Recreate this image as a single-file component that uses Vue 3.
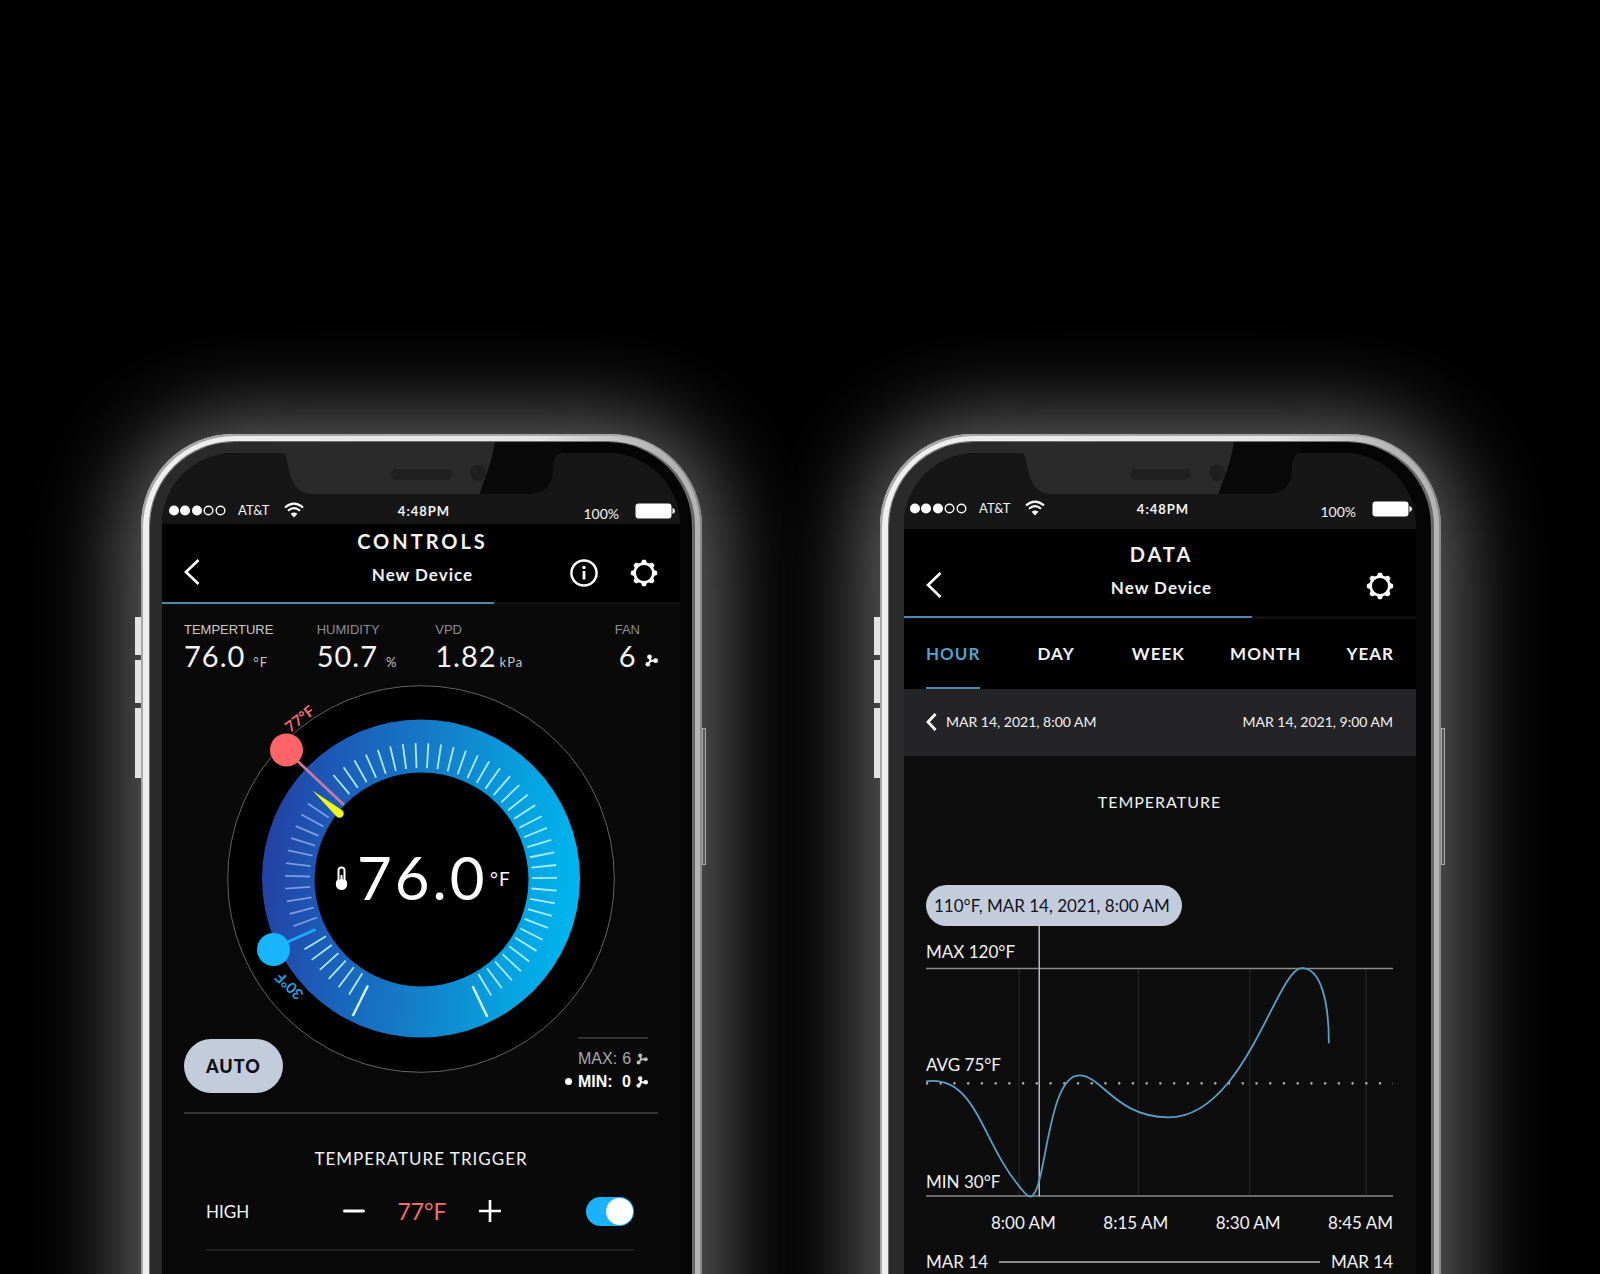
<script setup>
import { ref } from 'vue'

const phones = [
  { id: 'controls', title: 'CONTROLS', progress: 64 },
  { id: 'data', title: 'DATA', progress: 68 },
]

const stats = [
  { label: 'TEMPERTURE', value: '76.0', unit: '°F', bright: true },
  { label: 'HUMIDITY', value: '50.7', unit: '%' },
  { label: 'VPD', value: '1.82', unit: 'kPa', tight: true },
]

const hidden = [7, 19, 20]
const ticks = Array.from({ length: 58 }, (_, i) => ({
  id: i,
  angle: -153.5 + i * 5.4,
  long: i === 0 || i === 57,
  dim: i > 7 && i < 19,
})).filter((t) => !hidden.includes(t.id))

const tabs = ['HOUR', 'DAY', 'WEEK', 'MONTH', 'YEAR']
const activeTab = ref('HOUR')
const gridLines = [93, 212, 323, 439]
const times = ['8:00 AM', '8:15 AM', '8:30 AM', '8:45 AM']

const high = ref(77)
const highOn = ref(true)
</script>

<template>
  <main class="stage">
    <section v-for="p in phones" :key="p.id" class="phone" :class="p.id">
      <span class="side left one"></span>
      <span class="side left two"></span>
      <span class="side left three"></span>
      <span class="side right"></span>

      <div class="bezel">
        <svg class="notch" viewBox="0 0 542 52" aria-hidden="true">
          <path fill="#2a2a2a" d="M120 0V11H131Q136 11 137 18C140 38 146 52 162 52H330C332 42 341 26 345 0Z" />
          <path fill="#090909" d="M345 0C341 26 332 42 330 52H380C396 51 403 42 403 26Q403 11 412 11V0Z" />
          <rect x="241" y="26" width="61" height="12" rx="6" fill="#202020" />
          <path d="M246 26H298" stroke="#343434" fill="none" />
          <circle cx="328" cy="31" r="8" fill="#1f1f1f" />
        </svg>

        <div class="screen">
          <div class="status">
            <div class="status-left">
              <svg width="57" height="11" viewBox="0 0 57 11" aria-hidden="true">
                <g fill="#fff">
                  <circle cx="5" cy="5.5" r="5" /><circle cx="16" cy="5.5" r="5" /><circle cx="28" cy="5.5" r="5" />
                </g>
                <g fill="none" stroke="#fff" stroke-width="1.4">
                  <circle cx="39.500" cy="5.5" r="4.300" /><circle cx="51.500" cy="5.5" r="4.300" />
                </g>
              </svg>
              <span class="carrier">AT&amp;T</span>
              <svg class="wifi" width="20" height="16" viewBox="0 0 20 16" fill="none" stroke="#fff" aria-hidden="true">
                <path d="M1 5.500Q10-2.200 19 5.500" stroke-width="2.100" />
                <path d="M4 8.800Q10 3.400 16 8.800" stroke-width="2" />
                <path d="M10 15.500L6.600 11.800Q10 9 13.400 11.800Z" fill="#fff" stroke="none" />
              </svg>
            </div>
            <span class="clock">4:48PM</span>
            <div class="status-right">
              <span class="percent">100%</span>
              <svg class="battery" width="40" height="16" viewBox="0 0 40 16" aria-hidden="true">
                <rect x="0.500" y="0.500" width="36" height="15" rx="3" fill="#fff" />
                <path d="M37.500 5Q40 6 40 8T37.500 11Z" fill="#fff" />
              </svg>
            </div>
          </div>

          <header class="header">
            <button class="icon-btn back" aria-label="Back">
              <svg width="16" height="26" viewBox="0 0 16 26" fill="none" stroke="#fff" stroke-width="2.600">
                <path d="M14.500 1L2 13L14.500 25" />
              </svg>
            </button>
            <div class="titles">
              <h1>{{ p.title }}</h1>
              <p>New Device</p>
            </div>
            <div class="actions">
              <button v-if="p.id === 'controls'" class="icon-btn" aria-label="Information">
                <svg width="28" height="28" viewBox="0 0 28 28" fill="none" stroke="#fff">
                  <circle cx="14" cy="14" r="12.600" stroke-width="2.500" />
                  <path d="M14 12V20.500" stroke-width="2.800" />
                  <circle cx="14" cy="8.500" r="1.700" fill="#fff" stroke="none" />
                </svg>
              </button>
              <button class="icon-btn" aria-label="Settings">
                <svg width="28" height="28" viewBox="0 0 28 28" fill="#fff">
                  <circle cx="14" cy="14" r="9.400" fill="none" stroke="#fff" stroke-width="2.700" />
                  <path
                    v-for="n in 8" :key="n" :transform="`rotate(${n * 45} 14 14)`"
                    d="M10.800 5L11.800 1.800Q12.200 0.800 13 0.800H15Q15.800 0.800 16.200 1.800L17.200 5Z"
                  />
                </svg>
              </button>
            </div>
          </header>
          <div class="progress"><div class="bar" :style="{ width: p.progress + '%' }"></div></div>

          <div v-if="p.id === 'controls'" class="controls-body">
            <dl class="stats">
              <div v-for="s in stats" :key="s.label">
                <dt :class="{ bright: s.bright }">{{ s.label }}</dt>
                <dd :class="{ tight: s.tight }">{{ s.value }}<small>{{ s.unit }}</small></dd>
              </div>
              <div class="fan-stat">
                <dt>FAN</dt>
                <dd>6
                  <svg class="fan" width="13" height="13" viewBox="0 0 13 13" aria-hidden="true">
                    <path d="M4.500 3L5.500 7L3 10M5.500 7L10.500 6.500" stroke="#fff" stroke-width="2.200" fill="none" />
                    <circle cx="4.500" cy="2.800" r="2.400" fill="#fff" /><circle cx="2.800" cy="10.300" r="2.300" fill="#fff" /><circle cx="10.600" cy="6.700" r="2.400" fill="#fff" />
                  </svg>
                </dd>
              </div>
            </dl>

            <div class="dial-area">
              <svg class="dial" viewBox="0 0 388 388" role="img" aria-label="Temperature dial">
                <defs>
                  <linearGradient id="ring" x1="0" y1="0.450" x2="1" y2="0.550">
                    <stop offset="0" stop-color="#2440a4" />
                    <stop offset="0.200" stop-color="#1c5bb8" />
                    <stop offset="0.500" stop-color="#157cc8" />
                    <stop offset="0.800" stop-color="#06a2e0" />
                    <stop offset="1" stop-color="#00b6ee" />
                  </linearGradient>
                </defs>
                <circle cx="194" cy="194" r="193.300" fill="#000" stroke="#636363" />
                <circle cx="194" cy="193.500" r="159" fill="url(#ring)" />
                <circle cx="194.500" cy="194.500" r="107" fill="#000" />
                <line
                  v-for="t in ticks" :key="t.id" class="tick" :class="{ dim: t.dim, long: t.long }"
                  x1="194" x2="194" :y1="t.long ? 41 : 58" :y2="t.long ? 75 : 83"
                  :transform="`rotate(${t.angle} 194 194)`"
                />
                <line x1="62" y1="68" x2="117" y2="120" stroke="#c97a9d" stroke-width="2.800" />
                <circle cx="59.500" cy="65" r="16.500" fill="#ff6469" />
                <line x1="56" y1="259" x2="88.500" y2="244.500" stroke="#17aef8" stroke-width="3" />
                <circle cx="46.500" cy="264.500" r="16.500" fill="#18b4fc" />
                <path d="M85.500 105.500L115.500 125.500A4 4 0 0 1 109.500 131.500Z" fill="#f4f514" />
                <text class="mark" fill="#f06e70" text-anchor="middle" transform="translate(76 38) rotate(-38)">77°F</text>
                <text class="mark" fill="#2a9bd8" text-anchor="middle" transform="translate(66 297) rotate(224)">30°F</text>
                <path d="M111.500 185.500A3 3 0 0 1 117.500 185.500V195A4.700 4.700 0 1 1 111.500 195Z" fill="#000" stroke="#fff" stroke-width="2" />
                <circle cx="114.500" cy="199.500" r="5.600" fill="#fff" />
                <rect x="113.500" y="190" width="2" height="8" fill="#fff" />
                <text class="reading" x="130" y="215">76.0</text>
                <text class="reading-unit" x="263" y="201">°F</text>
              </svg>

              <div class="dial-foot">
                <button class="auto">AUTO</button>
                <ul class="limits">
                  <li>
                    <span>MAX:</span><span class="level">6</span>
                    <svg class="fan" width="12" height="12" viewBox="0 0 13 13" aria-hidden="true">
                      <path d="M4.500 3L5.500 7L3 10M5.500 7L10.500 6.500" stroke="#bbb" stroke-width="2" fill="none" />
                      <circle cx="4.500" cy="2.800" r="2.200" fill="#bbb" /><circle cx="2.800" cy="10.300" r="2.200" fill="#bbb" /><circle cx="10.600" cy="6.700" r="2.200" fill="#bbb" />
                    </svg>
                  </li>
                  <li class="current">
                    <i class="dot"></i><span>MIN:</span><span class="level">0</span>
                    <svg class="fan" width="12" height="12" viewBox="0 0 13 13" aria-hidden="true">
                      <path d="M4.500 3L5.500 7L3 10M5.500 7L10.500 6.500" stroke="#fff" stroke-width="2.200" fill="none" />
                      <circle cx="4.500" cy="2.800" r="2.400" fill="#fff" /><circle cx="2.800" cy="10.300" r="2.300" fill="#fff" /><circle cx="10.600" cy="6.700" r="2.400" fill="#fff" />
                    </svg>
                  </li>
                </ul>
              </div>
            </div>

            <hr />
            <h2>TEMPERATURE TRIGGER</h2>
            <div class="trigger">
              <label for="high-toggle">HIGH</label>
              <div class="stepper">
                <button class="icon-btn" aria-label="Lower" @click="high--">
                  <svg width="22" height="22" viewBox="0 0 22 22" stroke="#fff" stroke-width="3" stroke-linecap="round"><path d="M1.500 11H20.500" /></svg>
                </button>
                <output>{{ high }}°F</output>
                <button class="icon-btn" aria-label="Raise" @click="high++">
                  <svg width="22" height="22" viewBox="0 0 22 22" stroke="#fff" stroke-width="2.600"><path d="M0 11H22M11 0V22" /></svg>
                </button>
              </div>
              <input id="high-toggle" v-model="highOn" type="checkbox" class="toggle" />
            </div>
          </div>

          <div v-else class="data-body">
            <nav class="tabs">
              <button v-for="t in tabs" :key="t" :class="{ active: t === activeTab }" @click="activeTab = t">{{ t }}</button>
            </nav>
            <div class="range">
              <button class="icon-btn" aria-label="Previous hour">
                <svg width="11" height="18" viewBox="0 0 11 18" fill="none" stroke="#fff" stroke-width="2.800"><path d="M9.500 1L2 9L9.500 17" /></svg>
              </button>
              <span>MAR 14, 2021, 8:00 AM</span>
              <span class="to">MAR 14, 2021, 9:00 AM</span>
            </div>
            <div class="chart">
              <h2>TEMPERATURE</h2>
              <div class="pill">110°F, MAR 14, 2021, 8:00 AM</div>
              <svg class="plot" viewBox="0 0 466 272" role="img" aria-label="Temperature by hour">
                <line v-for="x in gridLines" :key="x" :x1="x" :x2="x" y1="43" y2="269" stroke="#292929" />
                <path d="M0 42.500H466M0 269.500H466" stroke="#8b8b8b" stroke-width="1.500" />
                <line x1="1" x2="467" y1="157" y2="157" stroke="#aaa" stroke-width="2.600" stroke-linecap="round" stroke-dasharray="0 13.700" />
                <line x1="113" x2="113" y1="0" y2="270" stroke="#b6bac8" stroke-width="1.500" />
                <path
                  d="M0 155C50 148 55 215 94 261C98 266 101 270 104 270C120 270 120 149 153 149C175 149 190 191 242 191C318 191 350 42 375 42C394 42 402 75 402 117"
                  fill="none" stroke="#5a9fc6" stroke-width="1.800"
                />
                <text x="0" y="32">MAX 120°F</text>
                <text x="0" y="145">AVG 75°F</text>
                <text x="0" y="261">MIN 30°F</text>
              </svg>
              <div class="times"><span v-for="t in times" :key="t">{{ t }}</span></div>
              <div class="days"><span>MAR 14</span><i></i><span>MAR 14</span></div>
            </div>
          </div>
        </div>
      </div>
    </section>
  </main>
</template>

<style>
body {
  margin: 0;
  background: #000;
}
</style>

<style scoped>
* {
  box-sizing: border-box;
}
.stage {
  display: flex;
  gap: 178px;
  min-height: 100vh;
  padding: 434px 159px 0 141px;
  overflow: hidden;
  background: #000;
  color: #f2f2f2;
  font-family: Lato, "Noto Sans", sans-serif;
}
.phone {
  position: relative;
  flex: 1;
  display: flex;
  min-width: 0;
  margin-bottom: -100px;
  padding: 8px 10px 0 9px;
  border-radius: 92px 92px 0 0;
  background: linear-gradient(to right, #efefef 0, #e6e6e6 70%, #b4b4b4 92%);
  box-shadow:
    inset 2px 2px 0 #a6a6a6,
    inset -2px 0 0 #8a8a8a,
    0 4px 90px 16px rgba(255, 255, 255, 0.42);
}
.side {
  position: absolute;
  background: #e4e4e4;
}
.left {
  left: -6px;
  width: 6px;
}
.one {
  top: 183px;
  height: 38px;
}
.two {
  top: 226px;
  height: 43px;
}
.three {
  top: 274px;
  height: 70px;
}
.side.right {
  right: -4px;
  top: 294px;
  width: 4px;
  height: 137px;
  border: 1px solid #a8a8a8;
  background: #555;
}
.bezel {
  position: relative;
  flex: 1;
  display: flex;
  min-width: 0;
  padding: 11px 12px 0;
  border-radius: 84px 84px 0 0;
  background: linear-gradient(to right, #2a2a2a 63%, #050505 64%);
  box-shadow: 0 0 0 1px #6f6f6f, 3px 0 0 #666;
}
.data .bezel {
  padding: 11px 15px 0;
}
.notch {
  position: absolute;
  top: 0;
  left: 0;
  width: 100%;
}
.screen {
  flex: 1;
  min-width: 0;
  overflow: hidden;
  border-radius: 72px 72px 0 0;
  background: #090909;
}
.data .screen {
  background: #0d0d0d;
}

.status {
  display: grid;
  grid-template-columns: 1fr auto 1fr;
  align-items: end;
  height: 71px;
  padding: 0 5px 5px 7px;
  background: #161616;
  font-size: 14px;
  line-height: 18px;
}
.data .status {
  height: 76px;
  padding: 0 4px 12px 6px;
}
.status-left,
.status-right {
  display: flex;
  align-items: center;
}
.status-right {
  justify-content: flex-end;
  align-items: flex-start;
  gap: 16px;
  height: 18px;
}
.percent {
  padding-top: 4px;
}
.battery {
  margin-top: 2px;
}
.carrier {
  margin: 0 14px 0 12px;
  font-size: 13px;
}
.clock {
  padding-left: 4px;
  font-size: 13px;
  font-weight: 700;
  line-height: 16px;
  letter-spacing: 1px;
}

.header {
  display: grid;
  grid-template-columns: 1fr auto 1fr;
  align-items: end;
  padding: 7px 22px 17px;
  background: #000;
}
.data .header {
  padding: 15px 22px 18px;
}
.icon-btn {
  display: flex;
  padding: 0;
  border: 0;
  background: none;
}
.titles {
  padding-left: 3px;
  text-align: center;
}
h1 {
  margin: 0 0 14px;
  font-size: 20px;
  font-weight: 700;
  line-height: 20px;
  letter-spacing: 3px;
}
.titles p {
  margin: 0;
  font-size: 17px;
  font-weight: 700;
  line-height: 20px;
  letter-spacing: 1px;
}
.actions {
  display: flex;
  justify-content: flex-end;
  gap: 32px;
  margin-bottom: -2px;
}
.progress {
  height: 3px;
  background: #101010;
}
.bar {
  height: 2px;
  background: #4c88b0;
}

.controls-body {
  padding: 17px 22px 0;
}
.stats {
  display: grid;
  grid-template-columns: 28% 25% 1fr auto;
  margin: 0 0 13px;
}
dt {
  color: #8e8e8e;
  font: 13px/16px "Liberation Sans", Arial, sans-serif;
}
dt.bright {
  color: #c9c9c9;
}
dd {
  height: 32px;
  margin: 2px 0 0;
  font-size: 29px;
  line-height: 32px;
  letter-spacing: 1px;
  white-space: nowrap;
}
dd small {
  margin-left: 8px;
  color: #c4c4c4;
  font-size: 13px;
  line-height: 16px;
}
dd.tight small {
  margin-left: 3px;
}
.fan-stat dt {
  margin-right: 18px;
  text-align: right;
}
.fan-stat dd {
  text-align: right;
}
.dial-area {
  display: grid;
  justify-items: center;
}
.dial {
  grid-area: 1 / 1;
  width: 388px;
  height: 388px;
  margin-bottom: 20px;
}
.tick {
  stroke: #a9ecff;
  stroke-width: 1.8px;
}
.tick.dim {
  stroke: #7f9be0;
}
.tick.long {
  stroke: #d4f6ff;
  stroke-width: 2.4px;
}
.mark {
  font-size: 15px;
  font-weight: 700;
}
.reading {
  fill: #fff;
  font-size: 60px;
  letter-spacing: 3px;
}
.reading-unit {
  fill: #fff;
  font-size: 19px;
  letter-spacing: 1px;
}
.dial-foot {
  grid-area: 1 / 1;
  align-self: end;
  justify-self: stretch;
  display: flex;
  align-items: flex-end;
  justify-content: space-between;
}
.auto {
  padding: 0 22px;
  border: 0;
  border-radius: 27px;
  background: #c3ccda;
  color: #0b0f18;
  font: 900 18px/54px Lato, "Noto Sans", sans-serif;
  letter-spacing: 1px;
}
.limits {
  width: 70px;
  margin: 0 10px 0 0;
  padding: 8px 0 0;
  border-top: 2px solid #333;
  color: #a8a8a8;
  font: 16px/23px "Liberation Sans", Arial, sans-serif;
  list-style: none;
}
.limits li {
  position: relative;
  display: flex;
  align-items: center;
  gap: 5px;
}
.limits .current {
  color: #fff;
  font-weight: 700;
}
.level {
  margin-left: auto;
}
.dot {
  position: absolute;
  left: -13px;
  top: 8px;
  width: 7px;
  height: 7px;
  border-radius: 50%;
  background: #fff;
}
hr {
  height: 2px;
  margin: 19px 0 0;
  border: 0;
  background: #363636;
}
h2 {
  margin: 0;
  font-size: 16px;
  font-weight: 400;
  line-height: 20px;
  letter-spacing: 1px;
  text-align: center;
}
.controls-body h2 {
  margin: 35px 0 14px;
  font-size: 17px;
}
.trigger {
  display: grid;
  grid-template-columns: 1fr auto 1fr;
  align-items: center;
  height: 68px;
  margin: 0 24px 0 22px;
  padding-bottom: 10px;
  border-bottom: 2px solid #202020;
  font-size: 17px;
}
.stepper {
  display: flex;
  align-items: center;
  gap: 32px;
  padding-left: 4px;
}
output {
  color: #f06e70;
  font-size: 23px;
}
.toggle {
  appearance: none;
  justify-self: end;
  width: 48px;
  height: 29px;
  margin: 0;
  padding: 1px;
  border-radius: 15px;
  background: #555;
}
.toggle::before {
  content: "";
  display: block;
  width: 27px;
  height: 27px;
  border-radius: 50%;
  background: #fff;
}
.toggle:checked {
  background: #19b2fb;
}
.toggle:checked::before {
  margin-left: 19px;
}

.tabs {
  display: flex;
  justify-content: space-between;
  height: 70px;
  padding: 0 22px;
  background: #000;
}
.tabs button {
  padding: 2px 0 0;
  border: 0;
  border-bottom: 2px solid transparent;
  background: none;
  color: #f2f2f2;
  font: 700 17px/20px Lato, "Noto Sans", sans-serif;
  letter-spacing: 1px;
}
.tabs button:nth-child(-n + 2) {
  margin-right: 12px;
}
.tabs .active {
  border-color: #4c88b0;
  color: #4ea3cf;
}
.range {
  display: flex;
  align-items: center;
  gap: 9px;
  height: 67px;
  padding: 0 23px 2px 22px;
  background: #242426;
  font-size: 14px;
}
.to {
  margin-left: auto;
}
.chart {
  padding: 36px 23px 0 22px;
  font-size: 17px;
  line-height: 20px;
}
.pill {
  width: fit-content;
  margin-top: 73px;
  padding: 0 12px 0 8px;
  border-radius: 21px;
  background: #c3ccda;
  color: #10141c;
  line-height: 41px;
}
.plot {
  display: block;
  width: 100%;
  fill: #f2f2f2;
}
.times {
  display: flex;
  justify-content: space-between;
  margin: 14px 0 19px 65px;
}
.days {
  display: flex;
  align-items: center;
  gap: 11px;
}
.days i {
  flex: 1;
  height: 2px;
  background: #8b8b8b;
}
</style>
